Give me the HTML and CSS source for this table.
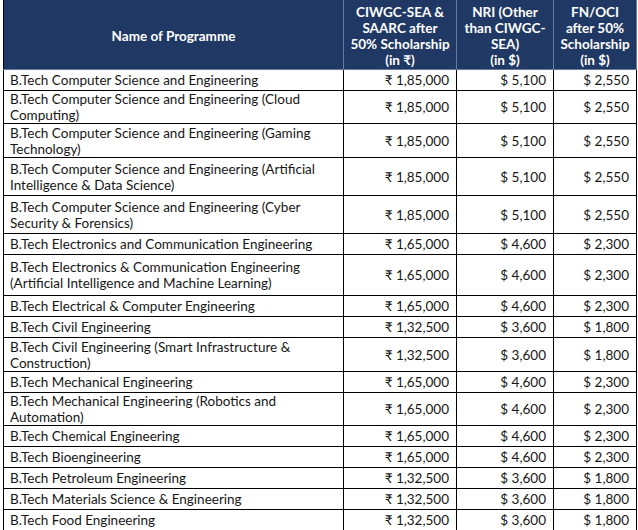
FILE: index.html
```html
<!DOCTYPE html>
<html>
<head>
<meta charset="utf-8">
<link rel="stylesheet" href="styles.css">
</head>
<body>
<div class="wrap">
<table class="fees">
  <colgroup>
    <col class="c-name"><col class="c-inr"><col class="c-nri"><col class="c-fn">
  </colgroup>
  <thead>
    <tr>
      <th>Name of Programme</th>
      <th>CIWGC-SEA &amp;<br>SAARC after<br>50% Scholarship<br>(in ₹)</th>
      <th>NRI (Other<br>than CIWGC-<br>SEA)<br>(in $)</th>
      <th>FN/OCI<br>after 50%<br>Scholarship<br>(in $)</th>
    </tr>
  </thead>
  <tbody>
    <tr class="r1"><td>B.Tech Computer Science and Engineering</td><td>₹ 1,85,000</td><td>$ 5,100</td><td>$ 2,550</td></tr>
    <tr class="r2"><td>B.Tech Computer Science and Engineering (Cloud Computing)</td><td>₹ 1,85,000</td><td>$ 5,100</td><td>$ 2,550</td></tr>
    <tr class="r2b"><td>B.Tech Computer Science and Engineering (Gaming Technology)</td><td>₹ 1,85,000</td><td>$ 5,100</td><td>$ 2,550</td></tr>
    <tr class="r3"><td>B.Tech Computer Science and Engineering (Artificial Intelligence &amp; Data Science)</td><td>₹ 1,85,000</td><td>$ 5,100</td><td>$ 2,550</td></tr>
    <tr class="r3"><td>B.Tech Computer Science and Engineering (Cyber Security &amp; Forensics)</td><td>₹ 1,85,000</td><td>$ 5,100</td><td>$ 2,550</td></tr>
    <tr class="r1"><td>B.Tech Electronics and Communication Engineering</td><td>₹ 1,65,000</td><td>$ 4,600</td><td>$ 2,300</td></tr>
    <tr class="r3b"><td>B.Tech Electronics &amp; Communication Engineering (Artificial Intelligence and Machine Learning)</td><td>₹ 1,65,000</td><td>$ 4,600</td><td>$ 2,300</td></tr>
    <tr class="r1"><td>B.Tech Electrical &amp; Computer Engineering</td><td>₹ 1,65,000</td><td>$ 4,600</td><td>$ 2,300</td></tr>
    <tr class="r1"><td>B.Tech Civil Engineering</td><td>₹ 1,32,500</td><td>$ 3,600</td><td>$ 1,800</td></tr>
    <tr class="r2b"><td>B.Tech Civil Engineering (Smart Infrastructure &amp; Construction)</td><td>₹ 1,32,500</td><td>$ 3,600</td><td>$ 1,800</td></tr>
    <tr class="r1"><td>B.Tech Mechanical Engineering</td><td>₹ 1,65,000</td><td>$ 4,600</td><td>$ 2,300</td></tr>
    <tr class="r2"><td>B.Tech Mechanical Engineering (Robotics and Automation)</td><td>₹ 1,65,000</td><td>$ 4,600</td><td>$ 2,300</td></tr>
    <tr class="r1"><td>B.Tech Chemical Engineering</td><td>₹ 1,65,000</td><td>$ 4,600</td><td>$ 2,300</td></tr>
    <tr class="r1"><td>B.Tech Bioengineering</td><td>₹ 1,65,000</td><td>$ 4,600</td><td>$ 2,300</td></tr>
    <tr class="r1"><td>B.Tech Petroleum Engineering</td><td>₹ 1,32,500</td><td>$ 3,600</td><td>$ 1,800</td></tr>
    <tr class="r1"><td>B.Tech Materials Science &amp; Engineering</td><td>₹ 1,32,500</td><td>$ 3,600</td><td>$ 1,800</td></tr>
    <tr class="r1"><td>B.Tech Food Engineering</td><td>₹ 1,32,500</td><td>$ 3,600</td><td>$ 1,800</td></tr>
  </tbody>
</table>
</div>
</body>
</html>
```
FILE: styles.css
```css
html, body {
  margin: 0;
  padding: 0;
  background: #ffffff;
}
.wrap {
  padding: 0 0 0 3px;
}
.fees {
  border-collapse: collapse;
  table-layout: fixed;
  width: 633px;
  font-family: Lato, "Noto Sans", "DejaVu Sans", sans-serif;
  font-size: 13.5px;
  color: #161616;
}
.c-name { width: 340px; }
.c-inr { width: 113px; }
.c-nri { width: 97px; }
.c-fn { width: 83px; }

.fees th {
  background: #1f3864;
  color: #ffffff;
  font-weight: bold;
  text-align: center;
  line-height: 16px;
  height: 67px;
  padding: 2px 2px 0;
  border: 1px solid #6a7b9c;
  border-top: none;
}
.fees th:first-child {
  border-left: 1px solid #000;
}
.fees td {
  border: 1px solid #000;
  line-height: 16px;
  padding: 0 7px 0 6px;
  text-align: right;
  vertical-align: middle;
}
.fees td:first-child {
  text-align: left;
}
.r1 td { height: 20px; }
.r2 td { height: 30px; }
.r2b td { height: 33px; }
.r3 td { height: 37px; }
.r3b td { height: 40px; }
```
